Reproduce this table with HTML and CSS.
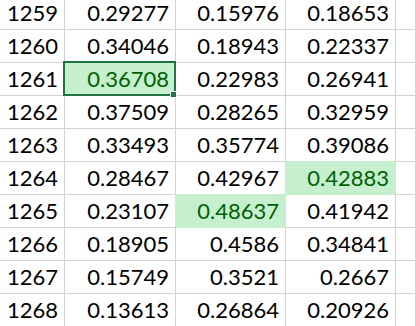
FILE: index.html
```html
<!DOCTYPE html>
<html>
<head>
<meta charset="utf-8">
<link rel="stylesheet" href="styles.css">
</head>
<body>
<div class="sheet">
  <div class="cell">1259</div><div class="cell">0.29277</div><div class="cell">0.15976</div><div class="cell">0.18653</div><div class="cell"></div>
  <div class="cell">1260</div><div class="cell">0.34046</div><div class="cell">0.18943</div><div class="cell">0.22337</div><div class="cell"></div>
  <div class="cell">1261</div><div class="cell good selected">0.36708</div><div class="cell">0.22983</div><div class="cell">0.26941</div><div class="cell"></div>
  <div class="cell">1262</div><div class="cell">0.37509</div><div class="cell">0.28265</div><div class="cell">0.32959</div><div class="cell"></div>
  <div class="cell">1263</div><div class="cell">0.33493</div><div class="cell">0.35774</div><div class="cell">0.39086</div><div class="cell"></div>
  <div class="cell">1264</div><div class="cell">0.28467</div><div class="cell">0.42967</div><div class="cell good">0.42883</div><div class="cell"></div>
  <div class="cell">1265</div><div class="cell">0.23107</div><div class="cell good">0.48637</div><div class="cell">0.41942</div><div class="cell"></div>
  <div class="cell">1266</div><div class="cell">0.18905</div><div class="cell">0.4586</div><div class="cell">0.34841</div><div class="cell"></div>
  <div class="cell">1267</div><div class="cell">0.15749</div><div class="cell">0.3521</div><div class="cell">0.2667</div><div class="cell"></div>
  <div class="cell">1268</div><div class="cell">0.13613</div><div class="cell">0.26864</div><div class="cell">0.20926</div><div class="cell"></div>
</div>
</body>
</html>
```
FILE: styles.css
```css
html, body {
  margin: 0;
  padding: 0;
  background: #ffffff;
  overflow: hidden;
}
.sheet {
  display: grid;
  grid-template-columns: 65px 111px 110px 110px 1fr;
  grid-auto-rows: 33px;
  margin-top: -3px;
  font-family: Lato, "Open Sans", sans-serif;
  font-size: 22px;
  color: #000000;
}
.cell {
  box-sizing: border-box;
  border-right: 1px solid #d4d4d4;
  border-bottom: 1px solid #d4d4d4;
  padding-right: 6px;
  text-align: right;
  line-height: 32px;
  white-space: nowrap;
  position: relative;
}
.good {
  background: #c6efce;
  color: #006100;
  border-color: #c6efce;
  box-shadow: -1px -1px 0 #c6efce;
}
.selected::after {
  content: "";
  position: absolute;
  left: -2px;
  top: -2px;
  right: -1px;
  bottom: -1px;
  border: 2px solid #217346;
}
.selected::before {
  content: "";
  position: absolute;
  right: -2px;
  bottom: -3px;
  width: 5px;
  height: 5px;
  background: #217346;
  border: 1px solid #ffffff;
  z-index: 1;
}
```
